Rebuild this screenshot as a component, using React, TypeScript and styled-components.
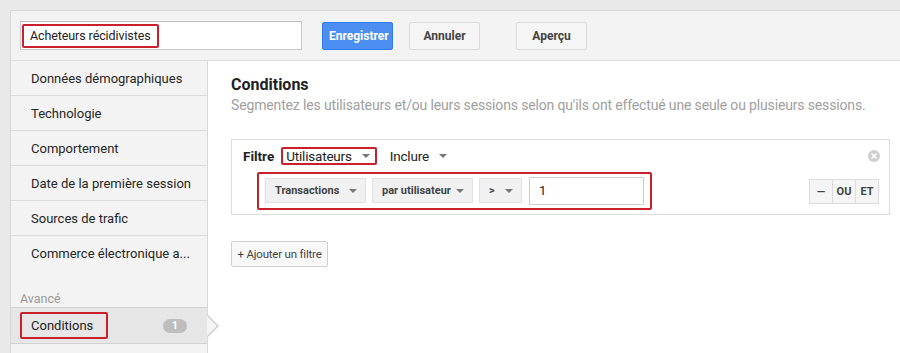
import React from "react";
import styled, { createGlobalStyle } from "styled-components";

const Global = createGlobalStyle`
  html, body { margin: 0; padding: 0; }
  body {
    background: #e9e9e9;
    font-family: Roboto, "Liberation Sans", Arial, sans-serif;
    color: #222;
    overflow: hidden;
  }
  * { box-sizing: border-box; }
`;

const Frame = styled.div`
  margin: 10px 0 0 10px;
  height: 343px;
  border-left: 1px solid #d6d6d6;
  border-top: 1px solid #d6d6d6;
  display: flex;
  flex-direction: column;
  background: #f3f3f3;
`;

const Header = styled.div`
  height: 50px;
  flex: none;
  display: flex;
  align-items: center;
  padding-left: 9px;
  border-bottom: 1px solid #dcdcdc;
  background: #f3f3f3;
`;

const NameInput = styled.div`
  width: 282px;
  height: 29px;
  background: #fff;
  border: 1px solid #c9c9c9;
  border-top-color: #bdbdbd;
  display: flex;
  align-items: center;
  padding-left: 1px;
`;

const Highlight = styled.span<{ $pad?: string }>`
  display: inline-flex;
  align-items: center;
  border: 2px solid #c9202c;
  border-radius: 2px;
  padding: ${(p) => p.$pad || "0 8px"};
`;

const NameText = styled.span`
  font-size: 12.5px;
  color: #222;
  line-height: 20px;
  padding: 0 4px;
  letter-spacing: -0.1px;
`;

const Btn = styled.button<{ $primary?: boolean; $ml: number }>`
  margin-left: ${(p) => p.$ml}px;
  width: 71px;
  height: 28px;
  border-radius: 2px;
  font-family: Roboto, "Liberation Sans", Arial, sans-serif;
  font-weight: 700;
  font-size: 12px;
  cursor: pointer;
  border: 1px solid ${(p) => (p.$primary ? "#3079ed" : "#dcdcdc")};
  background: ${(p) => (p.$primary ? "#4d8ff0" : "#f5f5f5")};
  color: ${(p) => (p.$primary ? "#fff" : "#444")};
`;

const Body = styled.div`
  flex: 1;
  display: flex;
  min-height: 0;
`;

const Sidebar = styled.div`
  width: 197px;
  flex: none;
  background: #f3f3f3;
  border-right: 1px solid #d9d9d9;
  display: flex;
  flex-direction: column;
`;

const NavItem = styled.div<{ $noBorder?: boolean }>`
  height: 35px;
  flex: none;
  display: flex;
  align-items: center;
  padding-left: 20px;
  font-size: 13px;
  color: #262626;
  border-bottom: ${(p) => (p.$noBorder ? "none" : "1px solid #dadada")};
  white-space: nowrap;
`;

const SectionLabel = styled.div`
  padding: 20px 0 0 9px;
  height: 36px;
  line-height: 16px;
  font-size: 12.5px;
  color: #9a9a9a;
  flex: none;
`;

const ActiveItem = styled.div`
  position: relative;
  height: 37px;
  flex: none;
  display: flex;
  align-items: center;
  padding: 0 20px 0 9px;
  justify-content: space-between;
  font-size: 13px;
  color: #222;
  background: #e6e6e6;
  border-top: 1px solid #d2d2d2;
  border-bottom: 1px solid #d2d2d2;

  &::before {
    content: "";
    position: absolute;
    right: -12px;
    top: 7px;
    border-top: 11px solid transparent;
    border-bottom: 11px solid transparent;
    border-left: 11px solid #cfcfcf;
  }
  &::after {
    content: "";
    position: absolute;
    right: -10px;
    top: 8px;
    border-top: 10px solid transparent;
    border-bottom: 10px solid transparent;
    border-left: 10px solid #f4f4f4;
  }
`;

const ActiveText = styled.span`
  line-height: 23px;
  padding: 0 13px 0 9px;
`;

const Badge = styled.span`
  width: 24px;
  height: 14px;
  border-radius: 7px;
  background: #bdbdbd;
  color: #fff;
  font-size: 11px;
  font-weight: 700;
  display: inline-flex;
  align-items: center;
  justify-content: center;
`;

const Main = styled.div`
  flex: 1;
  background: #fff;
  padding: 14px 10px 0 23px;
  min-width: 0;
`;

const Title = styled.div`
  font-size: 16px;
  font-weight: 700;
  line-height: 20px;
  color: #222;
`;

const Subtitle = styled.div`
  font-size: 14px;
  letter-spacing: -0.15px;
  line-height: 18px;
  color: #a0a0a0;
  margin-top: 1px;
  white-space: nowrap;
`;

const FilterBox = styled.div`
  margin-top: 25px;
  height: 76px;
  border: 1px solid #dcdcdc;
  padding: 7px 9px 0 11px;
`;

const FilterTop = styled.div`
  display: flex;
  align-items: center;
  height: 18px;
`;

const FilterLabel = styled.span`
  font-size: 13.5px;
  font-weight: 700;
  margin-right: 7px;
`;

const Caret = styled.span<{ $ml: number }>`
  display: inline-block;
  flex: none;
  margin-left: ${(p) => p.$ml}px;
  width: 0;
  height: 0;
  border-left: 4px solid transparent;
  border-right: 4px solid transparent;
  border-top: 4px solid #777;
`;

const DropText = styled.span`
  font-size: 13.5px;
  letter-spacing: -0.2px;
  color: #222;
  line-height: 14px;
`;

const PlainDrop = styled.span`
  display: inline-flex;
  align-items: center;
  margin-left: 13px;
`;

const CloseIcon = styled.span`
  margin-left: auto;
  width: 12px;
  height: 12px;
  border-radius: 50%;
  background: #cfcfcf;
  display: inline-flex;
  align-items: center;
  justify-content: center;
`;

const FilterRow = styled.div`
  margin-top: 7px;
  margin-left: 14px;
  display: flex;
  align-items: center;
  justify-content: space-between;
`;

const RuleGroup = styled.div`
  display: flex;
  align-items: center;
  gap: 6px;
  border: 2px solid #c9202c;
  border-radius: 2px;
  padding: 3px 6px 4px 6px;
  height: 38px;
`;

const Select = styled.div<{ $w: number }>`
  width: ${(p) => p.$w}px;
  height: 25px;
  background: #f1f1f1;
  border: 1px solid #e2e2e2;
  display: flex;
  align-items: center;
  justify-content: space-between;
  padding: 0 8px 0 9px;
  font-size: 11px;
  font-weight: 700;
  color: #444;
  white-space: nowrap;
`;

const ValueInput = styled.div`
  width: 115px;
  height: 28px;
  border: 1px solid #cfcfcf;
  background: #fff;
  display: flex;
  align-items: center;
  padding-left: 9px;
  font-size: 13px;
  color: #222;
  margin-left: 1px;
`;

const Logic = styled.div`
  display: flex;
  margin-right: 1px;
`;

const LogicBtn = styled.div`
  width: 24px;
  height: 25px;
  background: #f5f5f5;
  border: 1px solid #dcdcdc;
  margin-left: -1px;
  display: flex;
  align-items: center;
  justify-content: center;
  font-size: 11px;
  font-weight: 700;
  color: #444;
`;

const AddBtn = styled.div`
  margin-top: 26px;
  width: 97px;
  height: 26px;
  border: 1px solid #cfcfcf;
  border-radius: 2px;
  background: #f8f8f8;
  display: flex;
  align-items: center;
  justify-content: center;
  font-size: 11.5px;
  letter-spacing: -0.2px;
  color: #444;
  white-space: nowrap;
`;

export default function App() {
  return (
    <>
      <Global />
      <Frame>
        <Header>
          <NameInput>
            <Highlight $pad="0 2px">
              <NameText>Acheteurs récidivistes</NameText>
            </Highlight>
          </NameInput>
          <Btn $primary $ml={20}>Enregistrer</Btn>
          <Btn $ml={16}>Annuler</Btn>
          <Btn $ml={36}>Aperçu</Btn>
        </Header>
        <Body>
          <Sidebar>
            <NavItem>Données démographiques</NavItem>
            <NavItem>Technologie</NavItem>
            <NavItem>Comportement</NavItem>
            <NavItem>Date de la première session</NavItem>
            <NavItem>Sources de trafic</NavItem>
            <NavItem $noBorder>Commerce électronique a...</NavItem>
            <SectionLabel>Avancé</SectionLabel>
            <ActiveItem>
              <Highlight $pad="0">
                <ActiveText>Conditions</ActiveText>
              </Highlight>
              <Badge>1</Badge>
            </ActiveItem>
          </Sidebar>
          <Main>
            <Title>Conditions</Title>
            <Subtitle>
              Segmentez les utilisateurs et/ou leurs sessions selon qu'ils ont effectué une seule ou plusieurs sessions.
            </Subtitle>
            <FilterBox>
              <FilterTop>
                <FilterLabel>Filtre</FilterLabel>
                <Highlight $pad="0 5px 0 3px">
                  <DropText>Utilisateurs</DropText>
                  <Caret $ml={10} />
                </Highlight>
                <PlainDrop>
                  <DropText>Inclure</DropText>
                  <Caret $ml={10} />
                </PlainDrop>
                <CloseIcon>
                  <svg width="6" height="6" viewBox="0 0 6 6">
                    <path d="M0.5 0.5 L5.5 5.5 M5.5 0.5 L0.5 5.5" stroke="#fff" strokeWidth="1.5" />
                  </svg>
                </CloseIcon>
              </FilterTop>
              <FilterRow>
                <RuleGroup>
                  <Select $w={101}>
                    Transactions <Caret $ml={0} />
                  </Select>
                  <Select $w={101}>
                    par utilisateur <Caret $ml={0} />
                  </Select>
                  <Select $w={43}>
                    &gt; <Caret $ml={0} />
                  </Select>
                  <ValueInput>1</ValueInput>
                </RuleGroup>
                <Logic>
                  <LogicBtn>—</LogicBtn>
                  <LogicBtn>OU</LogicBtn>
                  <LogicBtn>ET</LogicBtn>
                </Logic>
              </FilterRow>
            </FilterBox>
            <AddBtn>+ Ajouter un filtre</AddBtn>
          </Main>
        </Body>
      </Frame>
    </>
  );
}
